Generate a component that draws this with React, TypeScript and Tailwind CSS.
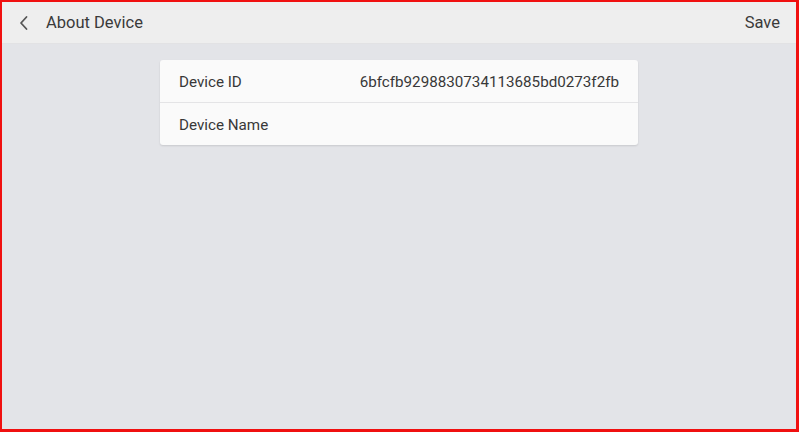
import React from "react";

export default function App() {
  return (
    <div
      className="w-[799px] h-[432px] flex flex-col bg-[#e3e4e8] border-t-2 border-l-2 border-r-[3px] border-b-[3px] border-[#f01010] overflow-hidden"
      style={{ fontFamily: "Roboto, 'Noto Sans', sans-serif" }}
    >
      <div className="h-[42px] shrink-0 bg-[#eeeeee] border-b border-[#e2e2e4] flex items-center pl-[16px] pr-[16px] pt-[2px] text-[#3a3a3a]">
        <svg width="12" height="16" viewBox="0 0 12 16" className="mr-[16px] mt-[-1px]">
          <path d="M8.5 2 L3 8 L8.5 14" fill="none" stroke="#555" strokeWidth="1.8" strokeLinecap="round" strokeLinejoin="round" />
        </svg>
        <span className="text-[16.5px] leading-none">About Device</span>
        <span className="ml-auto text-[16.5px] leading-none">Save</span>
      </div>
      <div className="flex-1 flex justify-center pt-[16px]">
        <div className="w-[478px] h-[85px] bg-[#fafafa] rounded-[3px] shadow-[0_1px_2px_rgba(0,0,0,0.12)] flex flex-col text-[15.2px] text-[#383838]">
          <div className="h-[43px] flex items-center px-[19px] pt-[3px] border-b border-[#e4e4e6]">
            <span>Device ID</span>
            <span className="ml-auto">6bfcfb9298830734113685bd0273f2fb</span>
          </div>
          <div className="flex-1 flex items-center px-[19px] pt-[3px]">
            <span>Device Name</span>
          </div>
        </div>
      </div>
    </div>
  );
}
